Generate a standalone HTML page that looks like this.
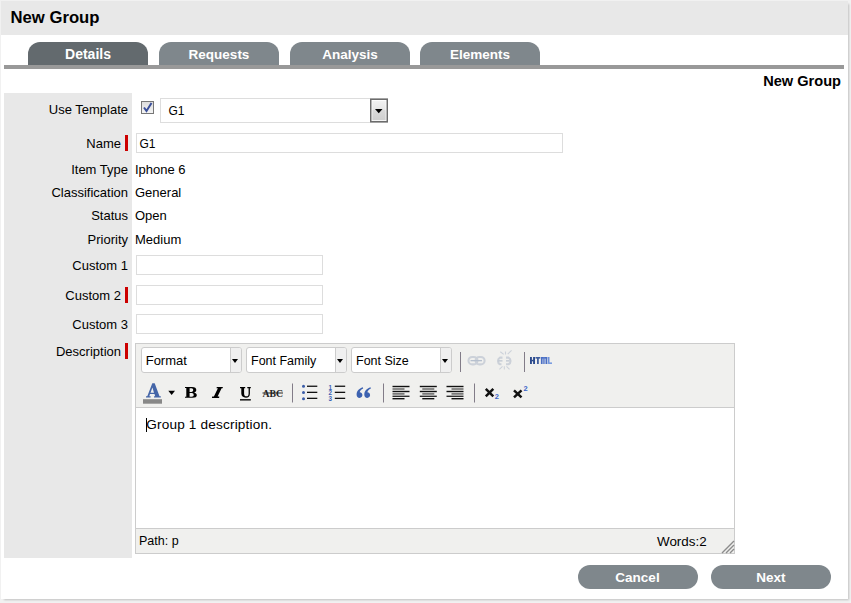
<!DOCTYPE html>
<html><head><meta charset="utf-8">
<style>
*{box-sizing:border-box;}
html,body{margin:0;padding:0;}
body{width:851px;height:603px;background:#f1f1f1;position:relative;overflow:hidden;font-family:"Liberation Sans",sans-serif;color:#000;}
.abs{position:absolute;}
#page{left:1px;top:1px;width:847px;height:598px;background:#fff;box-shadow:2px 2px 2px -1px rgba(0,0,0,0.2);}
#hdr{left:1px;top:1px;width:847px;height:34px;background:#e8e8e8;}
#hdr span{position:absolute;left:9.5px;top:8px;font-weight:bold;font-size:16.7px;line-height:18px;}
.tab{top:42px;width:120px;height:23px;border-radius:12px 12px 0 0;background:#7f878c;color:#fff;font-weight:bold;font-size:13.5px;text-align:center;line-height:25px;}
.tab.on{background:#636a6e;font-size:14px;}
#line{left:4px;top:65px;width:840px;height:4px;background:#999;}
#ttl{right:10px;top:72.5px;font-weight:bold;font-size:14.6px;line-height:16px;}
#panel{left:4px;top:93px;width:128px;height:465px;background:#e8e8e8;}
.lbl{right:723px;font-size:13px;line-height:15px;text-align:right;white-space:nowrap;}
.lbl.req{right:730px;}
.bar{left:125px;width:3px;height:16px;background:#c00;}
.val{left:135px;font-size:13px;line-height:15px;white-space:nowrap;}
.inp{background:#fff;border:1px solid #ddd;height:20px;}
.inp span{position:absolute;left:2.5px;top:2.5px;font-size:12px;line-height:15px;}
.sel{top:347px;width:101px;height:26px;border:1px solid #ccc;border-radius:3px;background:#fff;}
.sel span{position:absolute;left:4px;top:6px;font-size:12.5px;line-height:15px;white-space:nowrap;}
.sel i{position:absolute;right:0;top:0;width:11px;height:24px;border-left:1px solid #ccc;background:#f0f0f0;border-radius:0 2px 2px 0;}
.sel i:after{content:"";position:absolute;left:1px;top:11px;border-left:3.5px solid transparent;border-right:3.5px solid transparent;border-top:4px solid #000;}
.btn{top:565px;width:120px;height:24px;border-radius:12px;background:#7f878c;color:#fff;font-weight:bold;font-size:13.5px;text-align:center;line-height:25.5px;}
</style></head>
<body>
<div id="page" class="abs"></div>
<div id="hdr" class="abs"><span>New Group</span></div>

<div class="abs tab on" style="left:28px">Details</div>
<div class="abs tab" style="left:159px">Requests</div>
<div class="abs tab" style="left:290px">Analysis</div>
<div class="abs tab" style="left:420px">Elements</div>
<div id="line" class="abs"></div>
<div id="ttl" class="abs">New Group</div>

<div id="panel" class="abs"></div>

<!-- labels -->
<div class="abs lbl" style="top:102px">Use Template</div>
<div class="abs lbl req" style="top:136px">Name</div><div class="abs bar" style="top:135px"></div>
<div class="abs lbl" style="top:162px">Item Type</div>
<div class="abs lbl" style="top:185px">Classification</div>
<div class="abs lbl" style="top:208px">Status</div>
<div class="abs lbl" style="top:232px">Priority</div>
<div class="abs lbl" style="top:258px">Custom 1</div>
<div class="abs lbl req" style="top:288px">Custom 2</div><div class="abs bar" style="top:287px"></div>
<div class="abs lbl" style="top:317px">Custom 3</div>
<div class="abs lbl req" style="top:344px">Description</div><div class="abs bar" style="top:343px"></div>

<!-- values -->
<div class="abs val" style="top:162px">Iphone 6</div>
<div class="abs val" style="top:185px">General</div>
<div class="abs val" style="top:208px">Open</div>
<div class="abs val" style="top:232px">Medium</div>

<!-- checkbox -->
<div class="abs" style="left:141px;top:101px;width:13px;height:13px;border:1px solid #777;background:linear-gradient(#ddd,#f4f4f4);"></div>
<svg class="abs" style="left:142px;top:102px" width="11" height="11" viewBox="0 0 11 11"><path d="M2 5.5 L4.5 9 L9.5 1" stroke="#3a4f9a" stroke-width="2" fill="none"/></svg>

<!-- select -->
<div class="abs inp" style="left:160px;top:98px;width:228px;height:25px;"><span style="left:7.5px;top:4.5px">G1</span></div>
<svg class="abs" style="left:0;top:0" width="851" height="603" viewBox="0 0 851 603">
 <defs><linearGradient id="dg" x1="0" y1="0" x2="0" y2="1"><stop offset="0" stop-color="#f2f2f2"/><stop offset="0.45" stop-color="#e6e6e6"/><stop offset="0.5" stop-color="#d9d9d9"/><stop offset="1" stop-color="#cfcfcf"/></linearGradient></defs>
 <rect x="370.75" y="99.25" width="16.5" height="22.5" fill="#fff" stroke="#6c6c6c" stroke-width="1.5"/>
 <rect x="372.3" y="100.8" width="13.4" height="19.4" fill="url(#dg)"/>
 <path d="M375 109 H382.5 L378.75 113.2 Z" fill="#000"/>
</svg>
<!-- name -->
<div class="abs inp" style="left:136px;top:133px;width:427px;"><span>G1</span></div>

<!-- custom -->
<div class="abs inp" style="left:136px;top:255px;width:187px;"></div>
<div class="abs inp" style="left:136px;top:285px;width:187px;"></div>
<div class="abs inp" style="left:136px;top:314px;width:187px;"></div>

<!-- editor -->
<div class="abs" style="left:135px;top:343px;width:600px;height:211px;border:1px solid #ccc;background:#f0f0ee;"></div>
<div class="abs" style="left:136px;top:407px;width:598px;height:122px;background:#fff;border-top:1px solid #ccc;border-bottom:1px solid #ccc;"></div>
<div class="abs sel" style="left:141px"><span style="font-size:13px;left:3.7px;top:5.3px">Format</span><i></i></div>
<div class="abs sel" style="left:246px"><span>Font Family</span><i></i></div>
<div class="abs sel" style="left:351px"><span>Font Size</span><i></i></div>
<svg class="abs" style="left:0;top:0" width="851" height="603" viewBox="0 0 851 603">
 <!-- row1 separators -->
 <rect x="460" y="352" width="1" height="20" fill="#827c88"/>
 <rect x="524" y="352" width="1" height="20" fill="#827c88"/>
 <!-- link (disabled) -->
 <g fill="none" stroke="#ccd1d9" stroke-width="2.1">
  <rect x="468.5" y="357" width="9" height="7.4" rx="3.7"/>
  <rect x="475.6" y="357" width="9" height="7.4" rx="3.7"/>
 </g>
 <rect x="470.5" y="360" width="11.5" height="1.3" fill="#b6c0ce"/>
 <!-- unlink -->
 <g fill="none" stroke="#ccd1d9" stroke-width="2.1">
  <path d="M502.5 357.6 H500 A3.7 3.7 0 0 0 500 364.2 H501.5"/>
  <path d="M506 357.6 H508.5 A3.7 3.7 0 0 1 508.5 364.2 H506"/>
 </g>
 <path d="M498.5 360.9 H502.5 M506 360.9 H509.5" stroke="#bcc4d0" stroke-width="1.1"/>
 <g stroke="#cdd2da" stroke-width="1.1">
  <path d="M500.3 351.7 L503.7 354.4 M505.5 351.5 V354.6 M511.6 350.4 L507.7 354.1 M499.4 369.4 L502.5 366.3 M504.3 369.6 V366.2 M509.5 369.4 L506.5 366.3"/>
 </g>
 <!-- HTML -->
 <g>
  <rect x="530" y="357" width="1.9" height="7" fill="#2b4a8c"/><rect x="533.1" y="357" width="1.9" height="7" fill="#2b4a8c"/><rect x="531.5" y="359.8" width="2" height="1.5" fill="#2b4a8c"/>
  <rect x="535.5" y="357" width="4.7" height="1.6" fill="#3f5e9e"/><rect x="537" y="357" width="1.8" height="7" fill="#3f5e9e"/>
  <rect x="540.9" y="357" width="6.3" height="1.6" fill="#4a6ec4"/><rect x="540.9" y="357" width="1.7" height="7" fill="#4a6ec4"/><rect x="543.2" y="357" width="1.5" height="7" fill="#5a7ccc"/><rect x="545.5" y="357" width="1.7" height="7" fill="#4a6ec4"/>
  <rect x="547.8" y="357" width="1.7" height="7" fill="#6d90d8"/><rect x="547.8" y="362.4" width="4.2" height="1.6" fill="#7a9ce0"/>
 </g>
 <!-- row2: text color -->
 <path fill-rule="evenodd" fill="#4566a8" d="M146 397.4 H150.6 V396.3 H149.3 L150 394 H154.5 L155.2 396.3 H154 V397.4 H160.8 V396.3 H159.5 L154.7 383.3 H152.3 L147.3 396.3 H146 Z M150.5 392.7 H154 L152.4 387.5 Z"/>
 <rect x="143" y="399.2" width="19" height="4.5" fill="#888"/>
 <path d="M168.3 390.7 H175 L171.65 394.9 Z" fill="#000"/>
 <path fill-rule="evenodd" fill="#000" d="M185 387 H192 C195 387 196.3 388.3 196.3 390 C196.3 391.5 195.2 392.2 194 392.5 C195.8 392.8 196.8 394 196.8 395.3 C196.8 397 195.3 397.8 192.5 397.8 H185 V396.8 H186.3 V388 H185 Z M189.6 388.2 H191.5 C192.6 388.2 193.2 389 193.2 390 C193.2 391.1 192.6 391.9 191.5 391.9 H189.6 Z M189.6 393.1 H191.8 C193 393.1 193.7 394 193.7 395.1 C193.7 396.2 193 396.7 191.8 396.7 H189.6 Z"/>
 <path fill="#000" d="M216.8 387 H222.9 L222.6 388.3 H221.6 L217.6 396.6 H219.3 L219.1 397.9 H211.9 L212.2 396.6 H213.9 L217.9 388.3 H216.5 Z"/>
 <path fill="#000" d="M240 387 H245.2 V388.2 H244.1 V393.5 C244.1 395.6 245 396.3 246.4 396.3 C247.9 396.3 248.6 395.5 248.6 393.5 V388.2 H247.3 V387 H250.8 V388.2 H249.9 V393.7 C249.9 396.5 248.4 397.7 246 397.7 C243 397.7 241.3 396.4 241.3 393.6 V388.2 H240 Z"/>
 <rect x="240" y="399" width="10.8" height="1.6" fill="#222"/>
 <text x="262.5" y="397" font-family="Liberation Serif" font-weight="bold" font-size="11" fill="#222" textLength="20.5" lengthAdjust="spacingAndGlyphs">ABC</text>
 <rect x="262.5" y="392.5" width="20.5" height="1" fill="#222"/>
 <rect x="292" y="383.5" width="1" height="19" fill="#827c88"/>
 <!-- bullet list -->
 <g fill="#3a5ca8"><circle cx="303.5" cy="386.3" r="1.5"/><circle cx="303.5" cy="392.6" r="1.5"/><circle cx="303.5" cy="398.8" r="1.5"/></g>
 <g fill="#111"><rect x="307" y="385.6" width="10.3" height="1.3"/><rect x="307" y="391.7" width="10.3" height="1.3"/><rect x="307" y="397.7" width="10.3" height="1.3"/></g>
 <!-- numbered list -->
 <g font-family="Liberation Sans" font-weight="bold" font-size="6.6" fill="#3d62b4"><text x="328.6" y="389.5" textLength="3.5" lengthAdjust="spacingAndGlyphs">1</text><text x="328.6" y="395.4" textLength="3.5" lengthAdjust="spacingAndGlyphs">2</text><text x="328.6" y="401.4" textLength="3.5" lengthAdjust="spacingAndGlyphs">3</text></g>
 <g fill="#111"><rect x="334.8" y="385.6" width="10.4" height="1.3"/><rect x="334.8" y="391.7" width="10.4" height="1.3"/><rect x="334.8" y="397.7" width="10.4" height="1.3"/></g>
 <!-- blockquote -->
 <g fill="#3d62b0">
  <path d="M362.8 387.2 C359 388.5 356.6 391 356.6 394.4 C356.6 396.6 357.8 397.9 359.6 397.9 C361.3 397.9 362.4 396.7 362.4 395.1 C362.4 393.4 361.1 392.4 359.7 392.3 C359.9 390.6 361.1 389.3 363.2 388.4 Z"/>
  <path d="M370.5 387.2 C366.7 388.5 364.3 391 364.3 394.4 C364.3 396.6 365.5 397.9 367.3 397.9 C369 397.9 370.1 396.7 370.1 395.1 C370.1 393.4 368.8 392.4 367.4 392.3 C367.6 390.6 368.8 389.3 370.9 388.4 Z"/>
 </g>
 <rect x="383" y="383.5" width="1" height="19" fill="#827c88"/>
 <!-- align left/center/right -->
 <g>
  <rect x="392.5" y="385.8" width="17" height="1.4" fill="#111"/>
  <rect x="392.5" y="388.3" width="12" height="1.4" fill="#5e5e5e"/>
  <rect x="392.5" y="390.8" width="17" height="1.4" fill="#111"/>
  <rect x="392.5" y="393.2" width="12" height="1.4" fill="#5e5e5e"/>
  <rect x="392.5" y="395.6" width="17" height="1.4" fill="#2e2e2e"/>
  <rect x="392.5" y="398" width="12" height="1.4" fill="#111"/>

  <rect x="419.8" y="385.8" width="17" height="1.4" fill="#111"/>
  <rect x="422.3" y="388.3" width="12" height="1.4" fill="#5e5e5e"/>
  <rect x="419.8" y="390.8" width="17" height="1.4" fill="#111"/>
  <rect x="422.3" y="393.2" width="12" height="1.4" fill="#5e5e5e"/>
  <rect x="419.8" y="395.6" width="17" height="1.4" fill="#2e2e2e"/>
  <rect x="422.3" y="398" width="12" height="1.4" fill="#111"/>

  <rect x="446.5" y="385.8" width="17" height="1.4" fill="#111"/>
  <rect x="451.5" y="388.3" width="12" height="1.4" fill="#5e5e5e"/>
  <rect x="446.5" y="390.8" width="17" height="1.4" fill="#111"/>
  <rect x="451.5" y="393.2" width="12" height="1.4" fill="#5e5e5e"/>
  <rect x="446.5" y="395.6" width="17" height="1.4" fill="#2e2e2e"/>
  <rect x="451.5" y="398" width="12" height="1.4" fill="#111"/>
 </g>
 <rect x="474" y="383.5" width="1" height="19" fill="#827c88"/>
 <!-- sub / sup -->
 <path d="M485.8 388.8 L493.3 396.3 M493.3 388.8 L485.8 396.3" stroke="#111" stroke-width="2.5"/>
 <text x="494.8" y="399.4" font-family="Liberation Sans" font-weight="bold" font-size="7.5" fill="#3a66c8">2</text>
 <path d="M514 390.3 L521.5 397.3 M521.5 390.3 L514 397.3" stroke="#111" stroke-width="2.5"/>
 <text x="523.4" y="390.9" font-family="Liberation Sans" font-weight="bold" font-size="7.5" fill="#3a66c8">2</text>
 <!-- caret -->
 <rect x="146" y="418" width="1" height="14" fill="#000"/>
 <!-- resize grip -->
 <g stroke="#8c8c8c" stroke-width="1.4"><path d="M722 553 L734 541 M726 553 L734 545 M730 553 L734 549"/></g>
</svg>
<div class="abs" style="left:146.2px;top:417.3px;font-size:13.6px;letter-spacing:0.18px;line-height:16px;white-space:nowrap;">Group 1 description.</div>
<div class="abs" style="left:139px;top:534px;font-size:12.5px;line-height:15px;">Path: p</div>
<div class="abs" style="left:657px;top:533.5px;font-size:13.4px;line-height:15px;">Words:2</div>

<!-- buttons -->
<div class="abs btn" style="left:577.5px">Cancel</div>
<div class="abs btn" style="left:711px">Next</div>
</body></html>
